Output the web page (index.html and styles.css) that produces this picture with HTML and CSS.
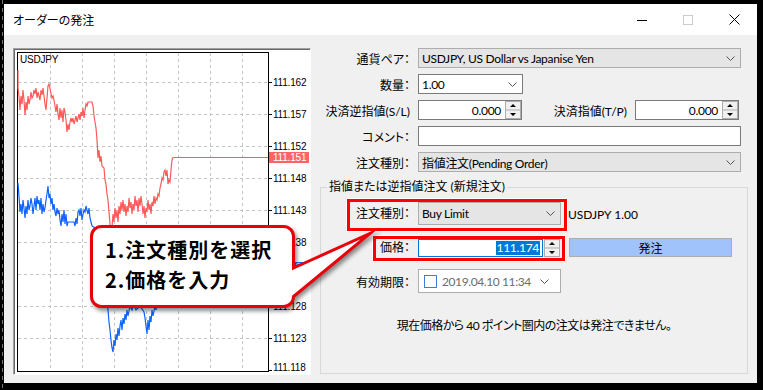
FILE: index.html
```html
<!DOCTYPE html>
<html lang="ja">
<head>
  <meta charset="UTF-8">
  <title>オーダーの発注</title>
  <link rel="stylesheet" href="styles.css">
</head>
<body>

  <div class="window">
    <div class="titlebar">
      <span class="title">オーダーの発注</span>
      <div class="winbtns">
        <span class="wb"><svg width="10" height="10" viewBox="0 0 10 10"><path d="M0 5.5H10" stroke="#000"/></svg></span>
        <span class="wb"><svg width="10" height="10" viewBox="0 0 10 10"><rect x="0.5" y="0.5" width="9" height="9" fill="none" stroke="#ccc"/></svg></span>
        <span class="wb"><svg width="11" height="11" viewBox="0 0 11 11"><path d="M0.5 0.5L10.5 10.5M10.5 0.5L0.5 10.5" stroke="#000"/></svg></span>
      </div>
    </div>

    <div class="content">
      <div class="chart">
        <svg width="296" height="325" viewBox="14 49 296 325">
          <path class="grid" d="M50.5 53V371M82.5 53V371M114.5 53V371M146.5 53V371M178.5 53V371M210.5 53V371M242.5 53V371M18 82.5H268M18 114.5H268M18 146.5H268M18 178.5H268M18 210.5H268M18 242.5H268M18 274.5H268M18 306.5H268M18 338.5H268"/>
          <rect x="17.5" y="52.5" width="251" height="319" fill="none" stroke="#000"/>
          <path d="M268 82.5h4M268 114.5h4M268 146.5h4M268 178.5h4M268 210.5h4M268 242.5h4M268 274.5h4M268 306.5h4M268 338.5h4M268 370.5h4" stroke="#000"/>
          <text class="sym-name" x="20" y="63">USDJPY</text>

          <polyline class="line-ask" points="18,70 18,88 19,96 20,110 21,96 22,104 23,90 24,100 25,115 26,102 27,110 28,96 29,104 30,100 31,92 32,98 33,96 34,90 35,94 36,88 37,98 38,92 39,96 40,100 41,90 42,95 43,88 44,96 45,104 46,110 47,98 48,86 49,84 50,88 51,94 52,98 53,96 54,100 55,106 56,112 57,104 58,114 59,120 60,108 61,118 62,110 63,122 64,108 65,112 66,120 67,132 68,124 69,130 70,122 71,118 72,122 73,118 74,124 75,120 76,116 77,122 78,118 79,114 80,120 81,112 82,116 83,108 84,118 85,110 86,104 87,106 88,102 92,102 93,106 94,116 95,122 96,128 97,140 98,158 99,150 100,162 101,156 102,166 104,168 105,180 106,184 107,194 108,200 109,212 110,224 111,235 112,228 113,214 114,222 115,208 116,218 117,210 118,222 119,206 120,214 121,202 122,210 123,200 124,212 125,204 126,216 127,206 128,212 129,198 130,208 131,202 132,214 133,204 134,210 135,196 136,206 137,200 138,212 139,198 140,206 141,196 142,204 143,214 144,206 145,218 146,208 147,212 148,200 149,210 150,204 151,214 152,202 153,206 154,196 155,204 156,198 157,200 158,194 159,196 160,188 161,184 162,178 163,180 164,172 165,170 166,176 167,170 168,184 169,180 170,182 171,170 172,160 173,157.5 268,157.5"/>
          <polyline class="line-bid" points="18,183 19,196 20,212 21,204 22,214 23,200 24,208 25,218 26,206 27,214 28,200 29,210 30,206 31,198 32,204 33,214 34,206 35,198 36,210 37,196 38,204 39,200 40,210 41,198 42,214 43,204 44,212 45,208 46,200 47,194 48,186 49,198 50,194 51,204 52,198 53,210 54,204 55,212 56,216 57,208 58,214 59,210 60,220 61,226 62,214 63,222 64,210 65,224 66,214 67,226 68,222 74,222 75,226 76,218 77,224 78,212 79,210 80,216 81,208 82,220 83,214 84,210 85,212 86,206 87,210 88,214 89,208 90,218 91,222 92,226 95,228 100,240 105,270 107,300 108,310 109,322 110,330 111,340 112,348 113,352 114,340 115,346 116,334 117,340 118,328 119,336 120,326 121,320 122,330 123,318 124,324 125,314 126,320 127,310 128,316 130,306 132,310 134,304 136,310 140,306 144,312 145,318 146,326 147,334 148,320 149,330 150,316 151,322 152,310 153,316 155,306 156,310 158,300"/>

          <g class="axis">
            <text x="273" y="86">111.162</text>
            <text x="273" y="118">111.157</text>
            <text x="273" y="150">111.152</text>
            <text x="273" y="182">111.148</text>
            <text x="273" y="214">111.143</text>
            <text x="273" y="246">111.138</text>
            <text x="273" y="310">111.128</text>
            <text x="273" y="342">111.123</text>
            <text x="273" y="371">111.118</text>
          </g>
          <rect x="269" y="152" width="40" height="11" fill="#ff6464"/>
          <text class="badge" x="273" y="161">111.151</text>
          <rect x="269" y="262" width="40" height="11" fill="#1a6cff"/>
          <text class="badge" x="273" y="271">111.134</text>
        </svg>
      </div>

      <div class="form">
        <div class="row">
          <span class="lbl">通貨ペア：</span>
          <div class="field gray w-wide">USDJPY, US Dollar vs Japanise Yen
            <svg class="chev" width="9" height="5" viewBox="0 0 9 5"><polyline points="0.5,0.5 4.5,4.5 8.5,0.5"/></svg>
          </div>
        </div>
        <div class="row">
          <span class="lbl">数量：</span>
          <div class="field w-qty">1.00
            <svg class="chev" width="9" height="5" viewBox="0 0 9 5"><polyline points="0.5,0.5 4.5,4.5 8.5,0.5"/></svg>
          </div>
        </div>
        <div class="row">
          <span class="lbl">決済逆指値(S/L)</span>
          <div class="field w-spin">
            <span class="val">0.000</span>
            <svg class="spin" width="16" height="18" viewBox="0 0 16 18"><rect x="0.5" y="0.5" width="15" height="17" fill="#f0f0f0" stroke="#adadad"/><path d="M1 9H15" stroke="#adadad"/><path d="M5 6H11L8 3Z M5 12H11L8 15Z" fill="#000"/></svg>
          </div>
          <span class="lbl lbl-tp">決済指値(T/P)</span>
          <div class="field w-spin">
            <span class="val">0.000</span>
            <svg class="spin" width="16" height="18" viewBox="0 0 16 18"><rect x="0.5" y="0.5" width="15" height="17" fill="#f0f0f0" stroke="#adadad"/><path d="M1 9H15" stroke="#adadad"/><path d="M5 6H11L8 3Z M5 12H11L8 15Z" fill="#000"/></svg>
          </div>
        </div>
        <div class="row">
          <span class="lbl">コメント：</span>
          <div class="field w-wide"></div>
        </div>
        <div class="row">
          <span class="lbl">注文種別：</span>
          <div class="field gray w-wide">指値注文(Pending Order)
            <svg class="chev" width="9" height="5" viewBox="0 0 9 5"><polyline points="0.5,0.5 4.5,4.5 8.5,0.5"/></svg>
          </div>
        </div>

        <fieldset class="group">
          <legend>指値または逆指値注文 (新規注文)</legend>

          <div class="grow">
            <div class="mark mark-type">
              <span class="mlbl">注文種別：</span>
              <div class="field gray w-type">Buy Limit
                <svg class="chev" width="9" height="5" viewBox="0 0 9 5"><polyline points="0.5,0.5 4.5,4.5 8.5,0.5"/></svg>
              </div>
            </div>
            <span class="sym">USDJPY 1.00</span>
          </div>

          <div class="grow grow-price">
            <div class="mark mark-price">
              <span class="mlbl">価格：</span>
              <div class="price-box">
                <div class="field price"><span class="sel">111.174</span></div>
                <svg class="spin spin-out" width="16" height="18" viewBox="0 0 16 18"><rect x="0.5" y="0.5" width="15" height="17" fill="#f0f0f0" stroke="#adadad"/><path d="M1 9H15" stroke="#adadad"/><path d="M5 6H11L8 3Z M5 12H11L8 15Z" fill="#000"/></svg>
              </div>
            </div>
            <button class="send">発注</button>
          </div>

          <div class="grow grow-exp">
            <span class="lbl lbl-exp">有効期限：</span>
            <div class="field date">
              <span class="cb"></span>
              <span class="dt">2019.04.10 11:34</span>
              <svg class="chev chev-date" width="9" height="5" viewBox="0 0 9 5"><polyline points="0.5,0.5 4.5,4.5 8.5,0.5"/></svg>
            </div>
          </div>

          <p class="note">現在価格から 40 ポイント圏内の注文は発注できません。</p>
        </fieldset>
      </div>
    </div>
  </div>

  <div class="callout">
    <svg class="callout-shape" width="290" height="96" viewBox="86 218 290 96">
      <path d="M101.5 226.5H283.5A10 10 0 0 1 293.5 236.5V268L370 233.5L293.5 296.5A10 10 0 0 1 283.5 306.5H101.5A10 10 0 0 1 91.5 296.5V236.5A10 10 0 0 1 101.5 226.5Z"/>
    </svg>
    <div class="callout-text">1.注文種別を選択<br>2.価格を入力</div>
  </div>

</body>
</html>
```

FILE: styles.css
```css
body {
  margin: 0;
  width: 763px;
  height: 390px;
  overflow: hidden;
  background: linear-gradient(#707070 50%, transparent 50%) 2px 0 / 1px 8px repeat-y, #000;
  font-family: Lato, "Noto Sans CJK JP", sans-serif;
  font-size: 12px;
  font-feature-settings: "palt";
  color: #000;
}

.window {
  margin: 4px 0 0 4px;
  width: 753px;
  height: 379px;
  background: #f0f0f0;
  display: flex;
  flex-direction: column;
}

.titlebar {
  height: 31px;
  flex: none;
  background: #fff;
  display: flex;
  align-items: center;
  padding-left: 9px;
}

.winbtns {
  margin-left: auto;
  display: flex;
  height: 100%;
}

.wb {
  width: 46px;
  display: flex;
  align-items: center;
  justify-content: center;
}

.wb svg {
  display: block;
}

.content {
  flex: 1;
  display: flex;
  padding: 13px 0 0 9px;
}

/* chart */

.chart {
  flex: none;
  width: 298px;
  height: 327px;
  box-sizing: border-box;
  border: 1px solid;
  border-color: #a0a0a0 #fff #fff #a0a0a0;
  box-shadow: inset 1px 1px 0 #696969;
  background: #fff;
}

.chart svg {
  display: block;
}

.grid {
  stroke: #c4c4c4;
  stroke-dasharray: 3 3;
  fill: none;
}

.line-ask {
  fill: none;
  stroke: #ff5a5a;
  stroke-width: 1.2;
}

.line-bid {
  fill: none;
  stroke: #0f64ff;
  stroke-width: 1.2;
}

.axis text,
.badge,
.sym-name {
  font-family: "Liberation Sans", sans-serif;
  font-size: 10px;
  letter-spacing: -0.2px;
}

.badge {
  fill: #fff;
}

/* form */

.form {
  flex: 1;
  display: flex;
  flex-direction: column;
  padding: 0 9px 9px;
}

.row {
  display: flex;
  align-items: center;
  gap: 8px;
  height: 20px;
  margin-bottom: 6px;
}

.lbl {
  flex: none;
  width: 90px;
  text-align: right;
  white-space: nowrap;
}

.lbl-tp {
  width: 80px;
  margin-left: 17px;
}

.field {
  box-sizing: border-box;
  height: 20px;
  border: 1px solid #7a7a7a;
  background: #fff;
  display: flex;
  align-items: center;
  padding-left: 3px;
  white-space: nowrap;
  letter-spacing: -0.3px;
}

.field.gray {
  background: #e5e5e5;
  border-color: #adadad;
}

.chev {
  margin-left: auto;
  margin-right: 5px;
  flex: none;
}

.chev polyline {
  fill: none;
  stroke: #555;
}

.w-wide {
  width: 323px;
}

.w-qty {
  width: 105px;
}

.w-spin {
  width: 104px;
  padding-left: 0;
}

.val {
  flex: 1;
  text-align: right;
  padding-right: 4px;
}

.spin {
  display: block;
  flex: none;
}

/* group */

.group {
  flex: 1;
  margin: 1px 0 0;
  padding: 0;
  min-width: 0;
  border: 1px solid #d8d8d8;
}

.group legend {
  margin-left: 6px;
  padding: 0 2px;
  line-height: 16px;
}

.grow {
  display: flex;
  align-items: flex-start;
}

.grow:first-of-type {
  margin-top: 4px;
}

.mark {
  box-sizing: border-box;
  display: flex;
  align-items: flex-start;
  gap: 8px;
  border: 3px solid #f00;
  box-shadow: 0 0 0 1px #fff;
}

.mlbl {
  flex: 1;
  text-align: right;
  white-space: nowrap;
}

.mark-type {
  margin-left: 26px;
  width: 220px;
  height: 32px;
  padding-right: 3px;
}

.mark-type .mlbl {
  line-height: 23px;
}

.w-type {
  width: 143px;
  height: 23px;
}

.sym {
  margin-left: 1px;
  line-height: 32px;
}

.grow-price {
  margin-top: 5px;
}

.mark-price {
  margin-left: 52px;
  width: 192px;
  height: 25px;
  padding-right: 2px;
}

.mark-price .mlbl {
  line-height: 18px;
}

.price-box {
  display: flex;
  gap: 1px;
}

.price {
  width: 125px;
  height: 18px;
  border-color: #0078d7;
  justify-content: flex-end;
  padding: 0 2px 0 0;
}

.sel {
  background: #0078d7;
  color: #fff;
  line-height: 14px;
  padding: 0 1px;
}

.send {
  margin: 2px 0 0 4px;
  width: 163px;
  height: 19px;
  padding: 0;
  border: 1px solid #adadad;
  background: #9fc3fa;
  font: inherit;
  color: #000;
}

.grow-exp {
  margin-top: 8px;
  align-items: center;
  gap: 8px;
}

.lbl-exp {
  width: 89px;
}

.date {
  width: 143px;
  height: 24px;
  border-color: #adadad;
  padding-left: 5px;
}

.cb {
  flex: none;
  width: 13px;
  height: 13px;
  box-sizing: border-box;
  border: 1px solid #3a7fd5;
  background: #fff;
}

.dt {
  margin-left: 5px;
  letter-spacing: -0.4px;
  color: #6d6d6d;
}

.chev-date {
  margin-right: 11px;
}

.note {
  margin: 25px 0 0;
  line-height: 16px;
  text-align: center;
  letter-spacing: -0.5px;
}

/* callout */

.callout {
  position: absolute;
  left: 86px;
  top: 218px;
  width: 290px;
  height: 96px;
}

.callout-shape {
  position: absolute;
  left: 0;
  top: 0;
  overflow: visible;
  filter: drop-shadow(2px 3px 2px rgba(0, 0, 0, 0.45));
}

.callout-shape path {
  fill: #fff;
  stroke: #e8000b;
  stroke-width: 3;
  stroke-miterlimit: 12;
}

.callout-text {
  position: absolute;
  left: 19px;
  top: 17px;
  font-family: "Noto Sans CJK JP", sans-serif;
  font-feature-settings: normal;
  font-weight: bold;
  font-size: 20px;
  line-height: 30px;
  letter-spacing: 1px;
  white-space: nowrap;
}
```
